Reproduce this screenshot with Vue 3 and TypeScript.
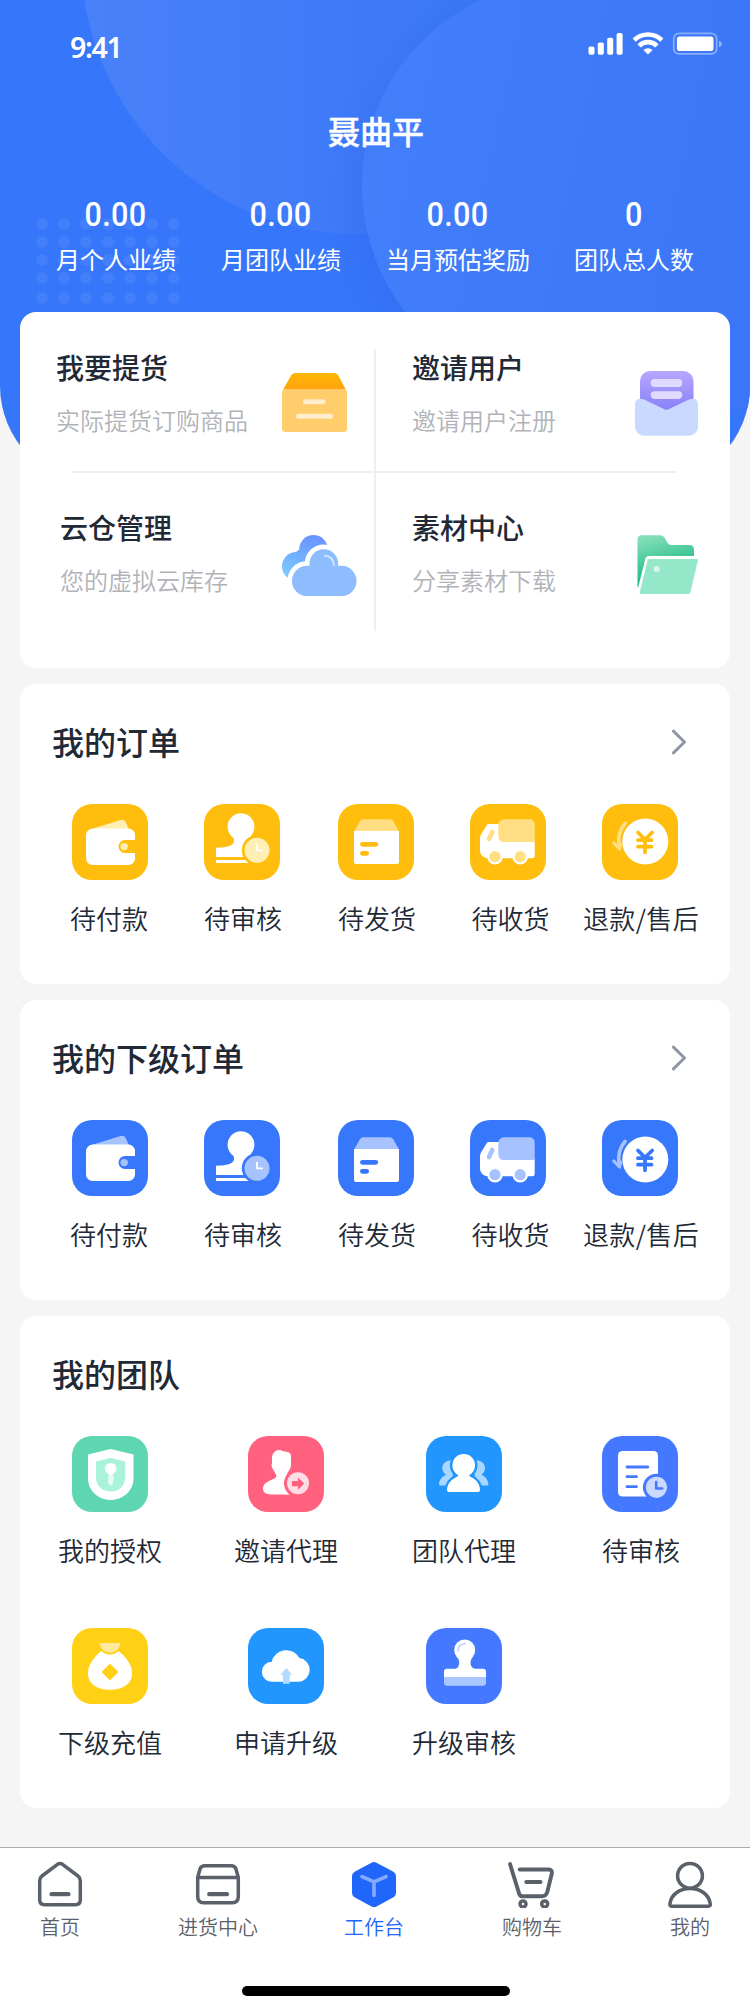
<script setup lang="ts">
interface Stat {
  value: string
  label: string
}

interface Feature {
  key: string
  title: string
  desc: string
}

interface Entry {
  icon: string
  label: string
  color?: string
}

interface OrderGroup {
  title: string
  color: string
  soft: string
  pale: string
  // vertical nudge of the glyphs inside their tiles
  shift: number
}

const stats: Stat[] = [
  { value: '0.00', label: '月个人业绩' },
  { value: '0.00', label: '月团队业绩' },
  { value: '0.00', label: '当月预估奖励' },
  { value: '0', label: '团队总人数' },
]

const features: Feature[] = [
  { key: 'pickup', title: '我要提货', desc: '实际提货订购商品' },
  { key: 'invite', title: '邀请用户', desc: '邀请用户注册' },
  { key: 'cloud', title: '云仓管理', desc: '您的虚拟云库存' },
  { key: 'folder', title: '素材中心', desc: '分享素材下载' },
]

const orderGroups: OrderGroup[] = [
  { title: '我的订单', color: '#ffbe0d', soft: '#ffde84', pale: '#ffefb5', shift: 0 },
  { title: '我的下级订单', color: '#3777fb', soft: '#a7c3ff', pale: '#a7c3ff', shift: 2 },
]

const orderEntries: Entry[] = [
  { icon: 'wallet', label: '待付款' },
  { icon: 'stamp', label: '待审核' },
  { icon: 'box', label: '待发货' },
  { icon: 'truck', label: '待收货' },
  { icon: 'refund', label: '退款/售后' },
]

const teamEntries: Entry[] = [
  { icon: 'shield', label: '我的授权', color: '#5dd6b1' },
  { icon: 'agent', label: '邀请代理', color: '#ff617e' },
  { icon: 'group', label: '团队代理', color: '#2196ff' },
  { icon: 'pending', label: '待审核', color: '#4479ff' },
  { icon: 'bag', label: '下级充值', color: '#ffd014' },
  { icon: 'upload', label: '申请升级', color: '#2196ff' },
  { icon: 'seal', label: '升级审核', color: '#4479ff' },
]

const tabs: Entry[] = [
  { icon: 'home', label: '首页' },
  { icon: 'goods', label: '进货中心' },
  { icon: 'work', label: '工作台' },
  { icon: 'cart', label: '购物车' },
  { icon: 'mine', label: '我的' },
]

const dotRows = [224, 242, 260, 278, 298]
const dotCols = [42, 64, 86, 108, 130, 152, 174]
</script>

<template>
  <div class="page">
    <svg class="backdrop" width="750" height="486" viewBox="0 0 750 486">
      <defs>
        <clipPath id="hero-clip">
          <path d="M0 0H750V386A98 98 0 0 1 652 484H98A98 98 0 0 1 0 386Z" />
        </clipPath>
        <linearGradient id="orb-a" x1="0" y1="0" x2="1" y2="0">
          <stop offset="0" stop-color="#4a81fa" />
          <stop offset="0.55" stop-color="#3d79f8" />
          <stop offset="1" stop-color="#3776f7" />
        </linearGradient>
        <linearGradient id="orb-b" gradientUnits="userSpaceOnUse" x1="362" y1="160" x2="750" y2="240">
          <stop offset="0" stop-color="#437efb" />
          <stop offset="1" stop-color="#3a76f6" />
        </linearGradient>
        <radialGradient id="orb-shade">
          <stop offset="0.82" stop-color="#2b66e6" stop-opacity="0.28" />
          <stop offset="1" stop-color="#2b66e6" stop-opacity="0" />
        </radialGradient>
      </defs>
      <g clip-path="url(#hero-clip)">
        <rect width="750" height="486" fill="#3676fb" />
        <circle cx="358" cy="-43" r="277" fill="url(#orb-a)" />
        <circle cx="564" cy="200" r="240" fill="url(#orb-shade)" />
        <path d="M567 -19H750V408Q650 420 567 391A205 205 0 0 1 567 -19Z" fill="url(#orb-b)" />
        <g fill="#447ffb">
          <template v-for="y in dotRows" :key="y">
            <circle v-for="x in dotCols" :key="x" :cx="x" :cy="y" r="6" />
          </template>
        </g>
      </g>
    </svg>

    <header class="hero">
      <div class="status">
        <span class="time">9:41</span>
        <svg class="signals" width="136" height="26" viewBox="0 0 136 26" fill="#fff">
          <rect x="0.5" y="15.5" width="6" height="8.3" rx="1.8" />
          <rect x="9.8" y="11.5" width="6" height="12.3" rx="1.8" />
          <rect x="19.2" y="6.7" width="6" height="17.1" rx="1.8" />
          <rect x="28.6" y="2" width="6" height="21.8" rx="1.8" />
          <g fill="none" stroke="#fff" stroke-width="4.6">
            <path d="M46.2 9.2A19.6 19.6 0 0 1 73.8 9.2" />
            <path d="M51 14.8A12.9 12.9 0 0 1 69 14.8" />
          </g>
          <path d="M60 23.6L55.4 19A6.6 6.6 0 0 1 64.600 19Z" />
          <rect x="85.700" y="2.300" width="43" height="20.600" rx="5.400" fill="none" stroke="#fff" stroke-opacity="0.4" stroke-width="1.700" />
          <rect x="88.900" y="5.600" width="36.600" height="14.400" rx="2.800" />
          <path d="M131 9.400Q134 10.600 134 12.800T131 16.200Z" fill-opacity="0.45" />
        </svg>
      </div>
      <h1 class="user-name">聂曲平</h1>
      <div class="stats">
        <div v-for="s in stats" :key="s.label" class="stat">
          <span class="stat-value">{{ s.value }}</span>
          <span class="stat-label">{{ s.label }}</span>
        </div>
      </div>
    </header>

    <main class="content">
      <section class="card features">
        <div v-for="f in features" :key="f.key" class="feature" :class="f.key">
          <div class="feature-text">
            <h2>{{ f.title }}</h2>
            <p>{{ f.desc }}</p>
          </div>
          <svg v-if="f.key === 'pickup'" width="65" height="60" viewBox="0 0 65 60">
            <defs>
              <linearGradient id="lid" x1="0" y1="0" x2="0" y2="1">
                <stop offset="0" stop-color="#ffb800" />
                <stop offset="1" stop-color="#ffa40f" />
              </linearGradient>
            </defs>
            <path d="M2 15.5H63Q65 17 65 20V55.500a3.500 3.500 0 0 1-3.500 3.500H3.500A3.500 3.500 0 0 1 0 55.500V20Q0 17 2 15.500Z" fill="#ffcd6b" />
            <path d="M1.500 16L9 2.500Q10.300 0 13 0H52.500Q55 0 56.300 2.500L63.500 16Z" fill="url(#lid)" />
            <path d="M23.500 28.700H41M16.500 43.300H48.500" stroke="#ffedcb" stroke-width="5" stroke-linecap="round" />
          </svg>
          <svg v-else-if="f.key === 'invite'" width="63" height="65" viewBox="0 0 63 65">
            <defs>
              <linearGradient id="letter" x1="0" y1="0" x2="0" y2="1">
                <stop offset="0" stop-color="#b8a6ff" />
                <stop offset="1" stop-color="#8681f9" />
              </linearGradient>
            </defs>
            <rect x="5" y="0" width="53.500" height="40" rx="10" fill="url(#letter)" />
            <path d="M0 33.500Q0 27.800 5.500 27.800Q7.500 27.800 9.500 28.700L29.500 38.200Q31.500 39.200 33.500 38.200L53.500 28.700Q55.500 27.800 57.500 27.800Q63 27.800 63 33.500V55.700a9 9 0 0 1-9 9H9a9 9 0 0 1-9-9Z" fill="#cad9ff" />
            <rect x="15.700" y="8" width="31.600" height="8" rx="4" fill="#e0dbfe" />
            <rect x="15.700" y="20.300" width="31.600" height="7.600" rx="3.800" fill="#e0dbfe" />
          </svg>
          <svg v-else-if="f.key === 'cloud'" width="76" height="62" viewBox="0 0 76 62">
            <defs>
              <linearGradient id="cloud-back" gradientUnits="userSpaceOnUse" x1="26" y1="0" x2="14" y2="45">
                <stop offset="0" stop-color="#6a93ff" />
                <stop offset="1" stop-color="#7bccff" />
              </linearGradient>
            </defs>
            <g fill="url(#cloud-back)">
              <circle cx="14.300" cy="31.300" r="14.300" />
              <circle cx="31.500" cy="14.300" r="14.300" />
              <path d="M14 17L18 14L34 24L20 38Z" />
            </g>
            <g fill="#fff">
              <circle cx="41.700" cy="28.500" r="19" />
              <rect x="5.400" y="25.900" width="73.500" height="39.800" rx="19.800" />
            </g>
            <g fill="#8dbdff">
              <path d="M27.500 32V28.500a14.300 14.300 0 0 1 28.600 0V32Z" />
              <rect x="10" y="30.700" width="64.500" height="30.400" rx="15.200" />
            </g>
            <path d="M43 20.600Q51.300 21.400 52 30.200" fill="none" stroke="#d8e9ff" stroke-width="1.800" stroke-linecap="round" />
          </svg>
          <svg v-else width="62" height="60" viewBox="0 0 62 60">
            <defs>
              <linearGradient id="folder-back" x1="0.300" y1="0" x2="0.600" y2="1">
                <stop offset="0" stop-color="#84deba" />
                <stop offset="0.700" stop-color="#24be87" />
              </linearGradient>
            </defs>
            <path d="M0.500 5Q0.500 0.300 5 0.300H23Q26 0.300 27.500 2.600L30.300 7.500Q31.800 10 34 10H52.500Q57 10 57 14.500V21H12Q9 21 8.300 24L1 53L0.500 52Z" fill="url(#folder-back)" />
            <path d="M12.500 24H60Q61.200 24 61 25.200L53.300 57.500Q53 59 51.500 59H4Q2.300 59 2.700 57.500L10.500 25.500Q11 24 12.500 24Z" fill="#95e7ca" />
            <circle cx="19.700" cy="34" r="3.100" fill="#d8f7ec" />
          </svg>
        </div>
      </section>

      <section v-for="g in orderGroups" :key="g.title" class="card">
        <div class="card-head">
          <h2>{{ g.title }}</h2>
          <svg class="chevron" width="18" height="28" viewBox="0 0 18 28">
            <path d="M3.400 3.100L14.500 14L3.400 24.900" fill="none" stroke="#8f96a6" stroke-width="3" stroke-linecap="round" stroke-linejoin="round" />
          </svg>
        </div>
        <div class="orders">
          <div v-for="e in orderEntries" :key="e.icon" class="entry">
            <svg width="76" height="76" viewBox="0 0 76 76">
              <rect width="76" height="76" rx="20" :fill="g.color" />
              <g v-if="e.icon === 'wallet'">
                <path d="M18 25.500L48.500 15.900Q52 14.900 53.700 18L57.300 26Z" :fill="g.pale" />
                <path d="M21 24.500H56.500A6.500 6.500 0 0 1 63 31V36H53a6.500 6.500 0 0 0 0 13H63V54.500A6.500 6.500 0 0 1 56.500 61H20.500A6.500 6.500 0 0 1 14 54.500V31.500A7 7 0 0 1 21 24.500Z" fill="#fff" />
                <circle cx="52.200" cy="42.600" r="3.700" :fill="g.pale" />
              </g>
              <g v-else-if="e.icon === 'stamp'" :transform="`translate(0 ${g.shift})`">
                <circle cx="37" cy="22.700" r="13.400" fill="#fff" />
                <path d="M27 31C30.500 34.500 31 37 29 39.500C27 42 22 43.700 12 43.700V53H46V38C45 34.500 46.500 32 48 30.300Z" fill="#fff" />
                <rect x="12" y="56" width="36" height="3" fill="#fff" />
                <circle cx="53" cy="46.300" r="15.200" :fill="g.color" />
                <circle cx="53" cy="46.300" r="12.500" :fill="g.pale" />
                <path d="M53 40V46.300H59" fill="none" stroke="#fff" stroke-width="1.800" />
              </g>
              <g v-else-if="e.icon === 'box'" :transform="`translate(0 ${g.shift})`">
                <path d="M16 27.500L22 17.300Q23.200 15.300 25.500 15.300H51.500Q54 15.300 55.300 17.300L61 27.500Z" :fill="g.soft" />
                <path d="M16 27H61V58a2 2 0 0 1-2 2H18a2 2 0 0 1-2-2Z" fill="#fff" />
                <path d="M24.400 40.300H37.800M24.400 49.300H28.700" :stroke="g.color" stroke-width="4.800" stroke-linecap="round" />
              </g>
              <g v-else-if="e.icon === 'truck'" :transform="`translate(0 ${g.shift})`">
                <path d="M19 20H32V36H64.700V52a2.200 2.200 0 0 1-2.200 2.200H18C13 54.200 10 50.500 10 46V34.500Q10 32.500 11 30.600L16.500 21.400Q17.400 20 19 20Z" fill="#fff" />
                <path d="M34 15.300H59.700a5 5 0 0 1 5 5V38H33.500a5.200 5.200 0 0 1-5.200-5.200V21A5.700 5.700 0 0 1 34 15.300Z" :fill="g.soft" />
                <path d="M22.300 28L19 35" :stroke="g.soft" stroke-width="4.600" stroke-linecap="round" />
                <g :fill="g.soft" stroke="#fff" stroke-width="2.200">
                  <circle cx="25" cy="52.700" r="6.700" />
                  <circle cx="50.200" cy="52.700" r="6.700" />
                </g>
              </g>
              <g v-else :transform="`translate(0 ${g.shift})`">
                <circle cx="43.300" cy="37.500" r="23" fill="#fff" />
                <path d="M36 28.500L43 35.500L50.200 28.500M43 35.500V48.300M36 36.200H49.500M36 42.700H49.500" fill="none" :stroke="g.color" stroke-width="3.800" stroke-linecap="round" stroke-linejoin="round" />
                <g fill="none" :stroke="g.soft" stroke-linecap="round" stroke-linejoin="round">
                  <path d="M23.200 19.300C17.600 25.600 15.900 33 17 41.500" stroke-width="3.600" />
                  <path d="M11.800 39L17.500 45L18.500 40" stroke-width="3.200" />
                </g>
              </g>
            </svg>
            <span class="entry-label">{{ e.label }}</span>
          </div>
        </div>
      </section>

      <section class="card team">
        <div class="card-head">
          <h2>我的团队</h2>
        </div>
        <div class="team-grid">
          <div v-for="e in teamEntries" :key="e.icon" class="entry">
            <svg width="76" height="76" viewBox="0 0 76 76">
              <rect width="76" height="76" rx="20" :fill="e.color" />
              <g v-if="e.icon === 'shield'">
                <path d="M38.700 13L61.500 18.500V42.500C61.500 55 50.500 64 38.700 64S16 55 16 42.500V18.500Z" fill="#fff" />
                <path d="M38.700 21.700L53.200 25.400V41.500C53.200 50 46.500 55.600 38.700 55.600S24 50 24 41.500V25.400Z" fill="#a9f2dc" />
                <path d="M36.300 37H41.200V41L42 43L41.200 44V47.500L38.700 49.800L36.300 47.500Z" fill="#e6fcf5" />
                <circle cx="38.700" cy="32.700" r="5.800" fill="#fff" />
              </g>
              <g v-else-if="e.icon === 'agent'">
                <path d="M24 22C24 17 28 13.300 32.500 14L35 15.300L40 16Q43 17 43 21V29C43 34 38.500 36 38.500 41V58.600H30Q22 58.600 18 57.400Q15 56 15 52.500C15 47 21 45 25.500 43C28.500 41.700 29 40 28 38.500L24 31.500Q23 29 24 27Z" fill="#fff" />
                <path d="M37 40H44V58.600H37Z" fill="#fff" />
                <circle cx="50" cy="47.300" r="14" :fill="e.color" />
                <circle cx="50" cy="47.300" r="11" fill="#ffdde4" />
                <path d="M44 44.900H50V41.500L56.300 47.500L50 53.700V50.200H44Z" :fill="e.color" />
              </g>
              <g v-else-if="e.icon === 'group'">
                <g fill="#aad7ff">
                  <path d="M28 24.300C21 23.500 16.300 27 16.300 32Q16.300 36 20 38.500C15 41.500 13 45 13 48Q13 49.500 14.500 49.500H26Z" />
                  <path d="M47.400 24.300C54.400 23.500 59 27 59 32Q59 36 55.400 38.500C60.400 41.500 62.400 45 62.400 48Q62.400 49.500 60.900 49.500H49.400Z" />
                </g>
                <g :stroke="e.color" stroke-width="5" :fill="e.color" stroke-linejoin="round">
                  <circle cx="37.700" cy="29.300" r="11.300" />
                  <path d="M32.500 38.500Q32.500 40 31 40.800C24.500 43.500 21 49 21 54Q21 56 23 56H52Q54 56 54 54C54 49 51 43.500 44.400 40.800Q43 40 43 38.500Z" />
                </g>
                <g fill="#fff">
                  <circle cx="37.700" cy="29.300" r="11.300" />
                  <path d="M32.500 38.500Q32.500 40 31 40.800C24.500 43.500 21 49 21 54Q21 56 23 56H52Q54 56 54 54C54 49 51 43.500 44.400 40.800Q43 40 43 38.500Z" />
                </g>
              </g>
              <g v-else-if="e.icon === 'pending'">
                <rect x="16" y="15" width="40" height="45.500" rx="4.500" fill="#fff" />
                <path d="M25 31H45.800M25 40.700H34.500M25 50.700H34.500" :stroke="e.color" stroke-width="2.800" stroke-linecap="round" />
                <circle cx="54.500" cy="51.300" r="13.600" :fill="e.color" />
                <circle cx="54.500" cy="51.300" r="10.600" fill="#cbd8ff" />
                <path d="M54.200 46V52.500H60.200" fill="none" :stroke="e.color" stroke-width="2.600" stroke-linecap="round" stroke-linejoin="round" />
              </g>
              <g v-else-if="e.icon === 'bag'">
                <path d="M28.500 15H47.500Q48.300 15 48 16.500C46.500 22 42.500 24.500 38 24.500S29.300 22 27.800 16.500Q27.500 15 28.500 15Z" fill="#ffe99f" />
                <path d="M29.300 23Q33 26.600 38 26.600T46.500 23C54.500 29.500 60 37 60 45C60 57 50 61.700 38 61.700S16 57 16 45C16 37 21.500 29.500 29.300 23Z" fill="#fff" />
                <path d="M38 37L45 44L38 51L31 44Z" :fill="e.color" :stroke="e.color" stroke-width="2" stroke-linejoin="round" />
              </g>
              <g v-else-if="e.icon === 'upload'">
                <path d="M24 53.800A10 10 0 0 1 23.700 33.800A15 15 0 0 1 51.500 30A12 12 0 0 1 51 53.800Z" fill="#fff" />
                <path d="M38.300 40L44.300 46.800H41.700V55.700H35V46.800H32.300Z" fill="#b3dbff" />
              </g>
              <g v-else>
                <circle cx="38.700" cy="22" r="10.500" fill="#fff" />
                <path d="M30 27.800C33 31 33.300 33 33.200 35.500C32.800 39 31 40.700 28.500 40.700H21Q18 40.700 18 43.500V49.500H60V43.500Q60 40.700 57 40.700H49.500C46.500 40.700 44.700 38 44.500 35.500C44.400 32 46 30 47.500 27.800Z" fill="#fff" />
                <path d="M18 49H60V55Q60 57.700 57 57.700H21Q18 57.700 18 55Z" fill="#a9c6ff" />
                <path d="M32 22.800Q32.400 16.400 39 15.700" fill="none" stroke="#c3d5ff" stroke-width="1.800" stroke-linecap="round" />
              </g>
            </svg>
            <span class="entry-label">{{ e.label }}</span>
          </div>
        </div>
      </section>
    </main>

    <nav class="tabbar">
      <div class="tabs">
        <div v-for="t in tabs" :key="t.icon" class="tab" :class="{ active: t.icon === 'work' }">
          <svg width="48" height="48" viewBox="0 0 48 48" fill="none" stroke="#5b616b" stroke-width="3.500" stroke-linecap="round" stroke-linejoin="round">
            <template v-if="t.icon === 'home'">
              <path d="M21.500 4.300Q24 2.700 26.500 4.300L42 16Q44.300 17.800 44.300 20.800V39.800Q44.300 44.700 39.500 44.700H8.500Q3.700 44.700 3.700 39.800V20.800Q3.700 17.800 6 16Z" />
              <path d="M15.600 34.200H32.400" stroke-width="4.200" />
            </template>
            <template v-else-if="t.icon === 'goods'">
              <path d="M3.700 17.500V36.500Q3.700 42.700 9.500 42.700H38.500Q44.300 42.700 44.300 36.500V17.500Z" />
              <path d="M3.700 17.500L6 9Q7 5.700 11 5.700H37Q41 5.700 42 9L44.300 17.500" />
              <path d="M15.200 34.200H33" stroke-width="4.200" />
            </template>
            <template v-else-if="t.icon === 'work'">
              <path d="M21.500 2.700Q24 1.400 26.500 2.700L43 11.400Q46 13 46 16V33Q46 36 43 37.600L26.500 46.500Q24 47.800 21.500 46.500L5 37.600Q2 36 2 33V16Q2 13 5 11.400Z" fill="#2166fa" stroke="none" />
              <path d="M12 16.600L24 21.900L36 16.600M24 21.900V35.500" stroke="#85aaff" stroke-width="3.600" />
            </template>
            <template v-else-if="t.icon === 'cart'">
              <path d="M2 4L11.200 33.800Q12 36.300 15 36.300H34Q38 36.300 39.200 32.300L43.700 14Q44.700 9.500 40.500 9.500H11.700" stroke-width="3.900" />
              <path d="M18.300 21.900H32.500" stroke-width="4" />
              <circle cx="15" cy="43.900" r="3" stroke-width="3.500" />
              <circle cx="36.700" cy="43.900" r="3" stroke-width="3.500" />
            </template>
            <template v-else>
              <circle cx="24" cy="15.800" r="12.400" />
              <path d="M3.900 44.100C5 34.500 13.500 28.600 24 28.600S43.200 34.500 44.300 44.100Q44.500 46.200 42.500 46.200H6Q3.700 46.200 3.900 44.100Z" />
            </template>
          </svg>
          <span>{{ t.label }}</span>
        </div>
      </div>
      <div class="home-indicator"></div>
    </nav>
  </div>
</template>

<style>
body {
  margin: 0;
  background: #f5f5f5;
}
</style>

<style scoped>
.page {
  position: relative;
  box-sizing: border-box;
  width: 750px;
  height: 2014px;
  display: flex;
  flex-direction: column;
  overflow: hidden;
  background: #f5f5f5;
  color: #222936;
  font-family: "Noto Sans CJK SC", sans-serif;
}

svg {
  display: block;
  flex: none;
}

h1,
h2,
p {
  margin: 0;
}

.backdrop {
  position: absolute;
  left: 0;
  top: 0;
}

.hero {
  position: relative;
  height: 312px;
  color: #fff;
}

.status {
  display: flex;
  justify-content: space-between;
  align-items: flex-start;
  height: 108px;
  padding: 0 26px 0 70px;
  box-sizing: border-box;
}

.time {
  margin-top: 27px;
  font: 600 28.5px/40px "Noto Sans", sans-serif;
  letter-spacing: -1.3px;
}

.signals {
  margin-top: 31px;
}

.user-name {
  font-size: 32px;
  font-weight: 500;
  line-height: 44px;
  padding-left: 2px;
  text-align: center;
  -webkit-text-stroke: 0.4px #fff;
}

.stats {
  display: grid;
  grid-template-columns: 166px 164px 190px 162px;
  margin: 43px 0 0 33px;
}

.stat {
  display: flex;
  flex-direction: column;
  align-items: center;
}

.stat-value {
  font: 500 34px/38px Roboto, sans-serif;
  letter-spacing: 0.4px;
  transform: scaleX(0.9);
}

.stat-label {
  margin-top: 8px;
  font-size: 24px;
  line-height: 36px;
  white-space: nowrap;
}

.content {
  position: relative;
  flex: 1;
  display: flex;
  flex-direction: column;
  gap: 16px;
  padding: 0 20px;
}

.card {
  box-sizing: border-box;
  height: 300px;
  border-radius: 16px;
  background: #fff;
}

.features {
  position: relative;
  display: grid;
  grid-template-columns: 355px 355px;
  grid-template-rows: 160px 196px;
  height: 356px;
}

.features::before,
.features::after {
  content: "";
  position: absolute;
  background: #efeff0;
}

.features::before {
  left: 52px;
  top: 159px;
  width: 605px;
  height: 2px;
}

.features::after {
  left: 354px;
  top: 37px;
  width: 2px;
  height: 282px;
}

.feature {
  display: flex;
  align-items: flex-start;
}

.feature-text {
  box-sizing: border-box;
  width: 262px;
  padding: 35px 0 0 36px;
}

.feature-text h2 {
  font-size: 28px;
  font-weight: 500;
  line-height: 40px;
}

.feature-text p {
  margin-top: 16px;
  font-size: 24px;
  font-weight: 350;
  line-height: 34px;
  color: #b1b3b8;
  white-space: nowrap;
}

.feature svg {
  margin-top: 63px;
}

.pickup svg {
  margin-top: 61px;
}

.cloud .feature-text {
  padding-left: 40px;
}

.invite .feature-text {
  width: 260px;
  padding-left: 37px;
}

.invite svg {
  margin-top: 59px;
}

.folder .feature-text {
  padding-left: 37px;
}

.card-head {
  display: flex;
  justify-content: space-between;
  align-items: center;
  height: 116px;
  padding: 0 42px 0 32px;
}

.card-head h2 {
  margin-top: -3px;
  font-size: 32px;
  font-weight: 500;
  line-height: 44px;
}

.orders {
  display: grid;
  grid-template-columns: 132px 134px 132px 132px 76px;
  padding: 4px 0 0 52px;
}

.entry {
  display: flex;
  flex-direction: column;
  align-items: center;
  width: 76px;
}

.entry-label {
  margin-top: 19px;
  font-size: 26px;
  font-weight: 350;
  line-height: 38px;
  white-space: nowrap;
}

.orders .entry:nth-child(1) .entry-label {
  margin-left: -2px;
}

.orders .entry:nth-child(2) .entry-label {
  margin-left: 2px;
}

.orders .entry:nth-child(3) .entry-label {
  margin-left: 2px;
}

.orders .entry:nth-child(4) .entry-label {
  margin-left: 5px;
}

.orders .entry:nth-child(5) .entry-label {
  margin-left: 2px;
  letter-spacing: 0.4px;
}

.team {
  height: 492px;
}

.team-grid {
  display: grid;
  grid-template-columns: 176px 178px 176px 76px;
  grid-auto-rows: 192px;
  padding: 4px 0 0 52px;
}

.team-grid .entry:nth-child(4) .entry-label {
  margin-left: 2px;
}

.tabbar {
  position: relative;
  box-sizing: border-box;
  height: 167px;
  border-top: 1px solid #a9abae;
  background: #fff;
}

.tabs {
  display: grid;
  grid-template-columns: 158px 156px 158px 158px 120px;
}

.tab {
  display: flex;
  flex-direction: column;
  align-items: center;
  width: 120px;
  padding-top: 12px;
  font-size: 20px;
  font-weight: 350;
  line-height: 30px;
  color: #5b616b;
}

.tab span {
  margin-top: 4px;
}

.tab.active {
  color: #2166fa;
}

.home-indicator {
  width: 268px;
  height: 10px;
  margin: 44px 0 0 242px;
  border-radius: 5px;
  background: #000;
}
</style>
